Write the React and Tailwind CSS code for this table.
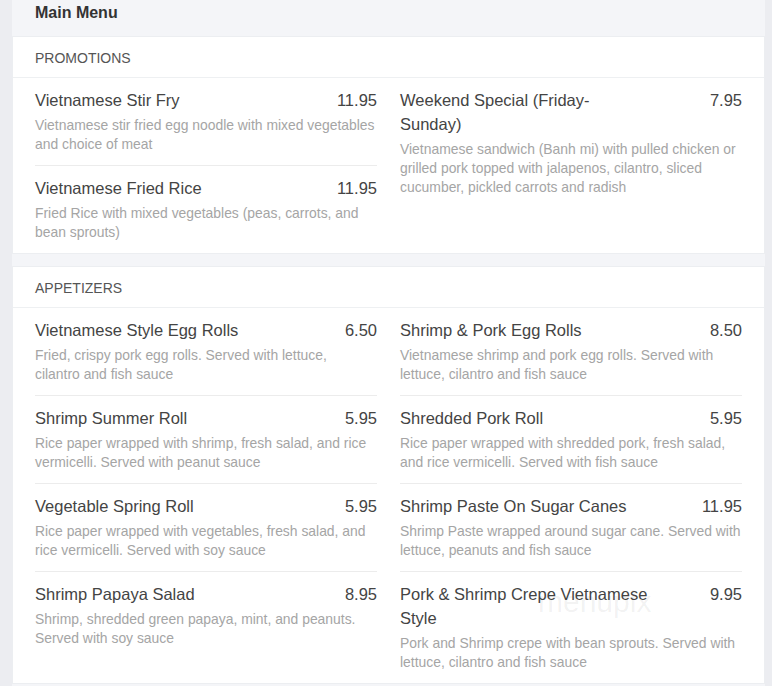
import React from 'react';

const sections = [
    {
        title: 'Promotions',
        left: [
            { name: 'Vietnamese Stir Fry', price: '11.95', desc: 'Vietnamese stir fried egg noodle with mixed vegetables and choice of meat' },
            { name: 'Vietnamese Fried Rice', price: '11.95', desc: 'Fried Rice with mixed vegetables (peas, carrots, and bean sprouts)' },
        ],
        right: [
            { name: 'Weekend Special (Friday-Sunday)', price: '7.95', desc: 'Vietnamese sandwich (Banh mi) with pulled chicken or grilled pork topped with jalapenos, cilantro, sliced cucumber, pickled carrots and radish' },
        ],
    },
    {
        title: 'Appetizers',
        left: [
            { name: 'Vietnamese Style Egg Rolls', price: '6.50', desc: 'Fried, crispy pork egg rolls. Served with lettuce, cilantro and fish sauce', narrow: true },
            { name: 'Shrimp Summer Roll', price: '5.95', desc: 'Rice paper wrapped with shrimp, fresh salad, and rice vermicelli. Served with peanut sauce' },
            { name: 'Vegetable Spring Roll', price: '5.95', desc: 'Rice paper wrapped with vegetables, fresh salad, and rice vermicelli. Served with soy sauce' },
            { name: 'Shrimp Papaya Salad', price: '8.95', desc: 'Shrimp, shredded green papaya, mint, and peanuts. Served with soy sauce' },
        ],
        right: [
            { name: 'Shrimp & Pork Egg Rolls', price: '8.50', desc: 'Vietnamese shrimp and pork egg rolls. Served with lettuce, cilantro and fish sauce' },
            { name: 'Shredded Pork Roll', price: '5.95', desc: 'Rice paper wrapped with shredded pork, fresh salad, and rice vermicelli. Served with fish sauce' },
            { name: 'Shrimp Paste On Sugar Canes', price: '11.95', desc: 'Shrimp Paste wrapped around sugar cane. Served with lettuce, peanuts and fish sauce' },
            { name: 'Pork & Shrimp Crepe Vietnamese Style', price: '9.95', desc: 'Pork and Shrimp crepe with bean sprouts. Served with lettuce, cilantro and fish sauce' },
        ],
    },
];

const Item = ({ item, last }) => (
    <div className={`pt-[10px] pb-[11px] ${last ? '' : 'border-b border-[#ececec]'}`}>
        <div className="flex justify-between gap-4 text-[16.5px] leading-[24px] text-[#444]">
            <span className="max-w-[249px]">{item.name}</span>
            <span>{item.price}</span>
        </div>
        <p className={`mt-[4px] text-[13.9px] leading-[19px] text-[#a5a5a5] ${item.narrow ? 'pr-[12px]' : ''}`}>{item.desc}</p>
    </div>
);

const Section = ({ section }) => (
    <div className="bg-white border border-[#eceef1]">
        {/* Header */}
        <div className="h-[41px] px-[22px] pt-[3px] flex items-center border-b border-[#eef0f2] text-[14px] uppercase text-[#555]">
            {section.title}
        </div>
        {/* Items */}
        <div className="grid grid-cols-2 gap-x-[23px] px-[22px]">
            <div className="flex flex-col">
                {section.left.map((it, i) => (
                    <Item key={i} item={it} last={i === section.left.length - 1} />
                ))}
            </div>
            <div className="flex flex-col">
                {section.right.map((it, i) => (
                    <Item key={i} item={it} last={i === section.right.length - 1} />
                ))}
            </div>
        </div>
    </div>
);

export default function App() {
    return (
        <div className="min-h-[686px] bg-[#ecedf1] pl-[12px] pr-[7px]" style={{ fontFamily: '"Liberation Sans", Arial, sans-serif' }}>
            <div className="relative bg-[#f4f5f8] min-h-[686px]">
                <div className="h-[36px] px-[23px] pt-[1px] text-[16px] font-bold text-[#333]">Main Menu</div>
                <div className="flex flex-col gap-[12px]">
                    {sections.map((s, i) => (
                        <Section key={i} section={s} />
                    ))}
                </div>
                {/* watermark */}
                <div className="absolute left-[526px] top-[579px] text-[30px] text-[#444]/[0.07] select-none pointer-events-none">menupix</div>
            </div>
        </div>
    );
}
